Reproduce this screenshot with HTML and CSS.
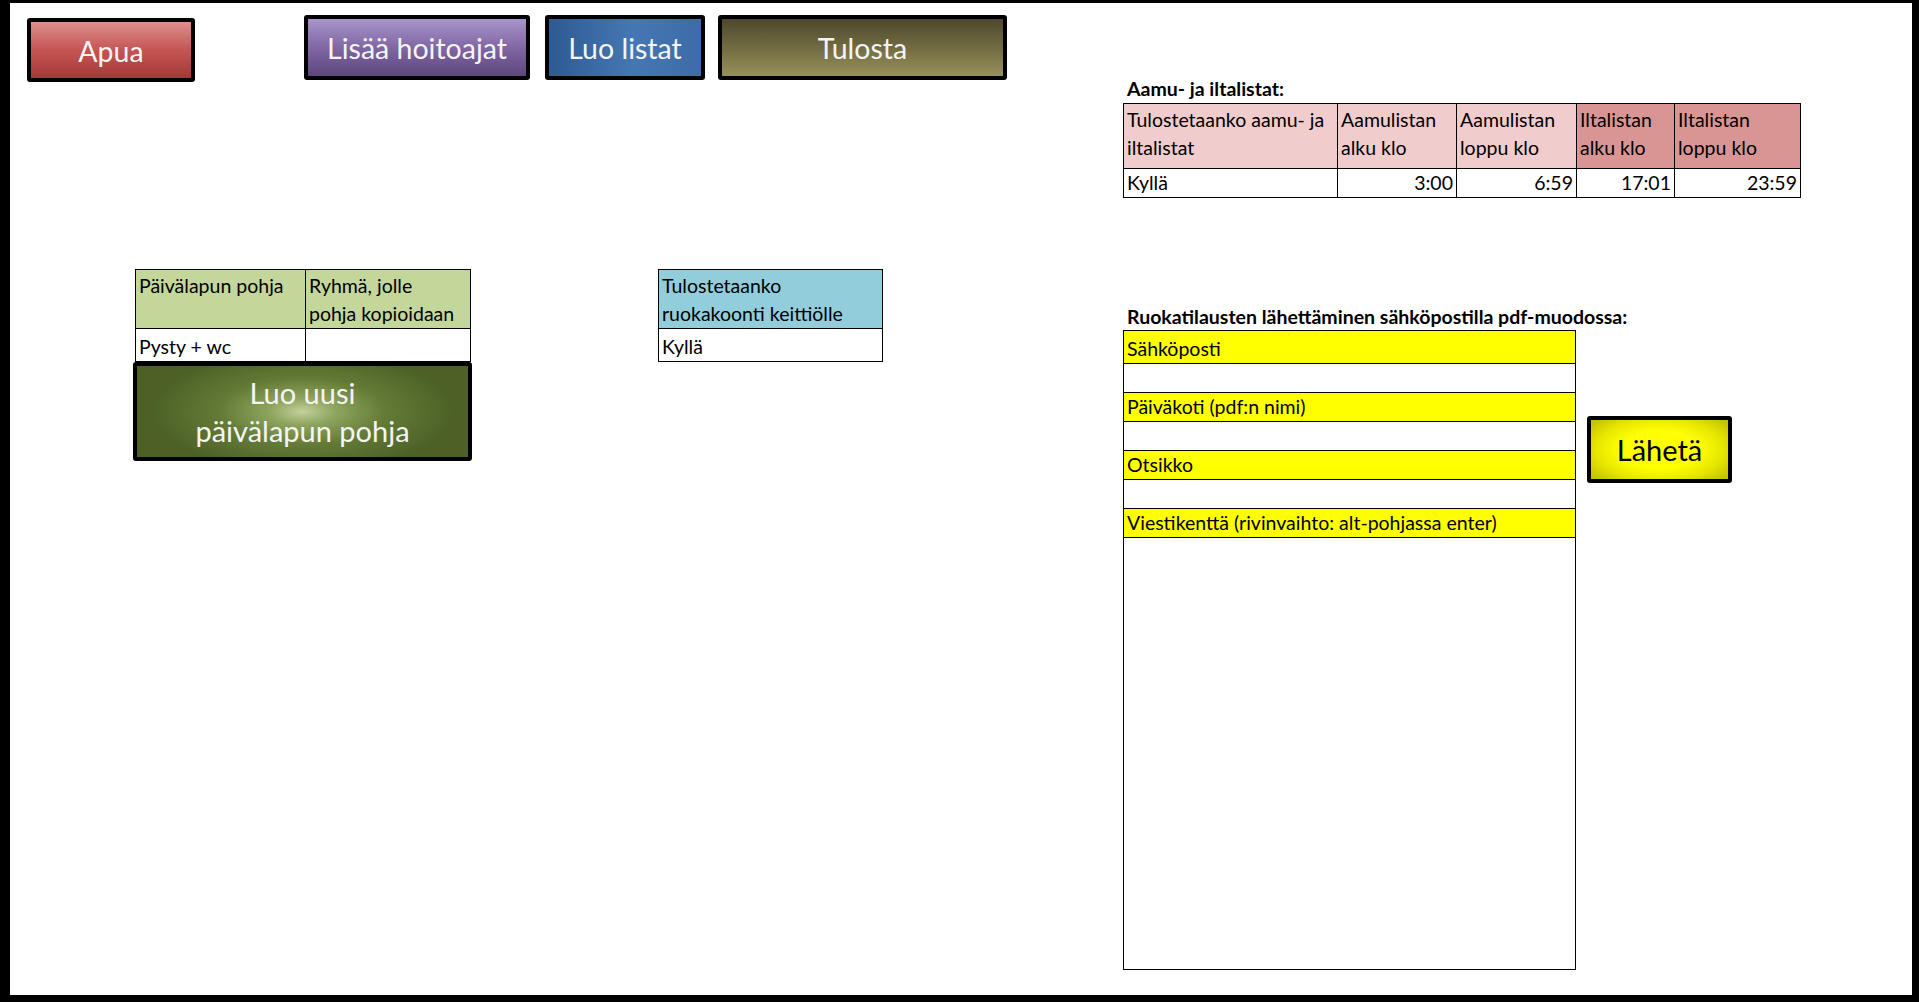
FILE: index.html
```html
<!DOCTYPE html>
<html lang="fi">
<head>
<meta charset="utf-8">
<title>Päivälaput</title>
<link rel="stylesheet" href="styles.css">
</head>
<body>
<div class="sheet">
  <div class="left">
    <div class="buttons">
      <div class="btn btn-apua">Apua</div>
      <div class="btn btn-lisaa">Lisää hoitoajat</div>
      <div class="btn btn-luo">Luo listat</div>
      <div class="btn btn-tulosta">Tulosta</div>
    </div>
    <div class="lower">
      <div class="green-block">
        <table class="grid green">
          <colgroup><col class="g1"><col class="g2"></colgroup>
          <tr class="head"><td>Päivälapun pohja</td><td>Ryhmä, jolle<br>pohja kopioidaan</td></tr>
          <tr class="data"><td>Pysty + wc</td><td></td></tr>
        </table>
        <div class="btn btn-uusi">Luo uusi<br>päivälapun pohja</div>
      </div>
      <table class="grid blue">
        <tr class="head"><td>Tulostetaanko<br>ruokakoonti keittiölle</td></tr>
        <tr class="data"><td>Kyllä</td></tr>
      </table>
    </div>
  </div>
  <div class="right">
    <div class="title">Aamu- ja iltalistat:</div>
    <table class="grid aamu">
      <colgroup><col class="a1"><col class="a2"><col class="a3"><col class="a4"><col class="a5"></colgroup>
      <tr class="head">
        <td class="pink">Tulostetaanko aamu- ja iltalistat</td>
        <td class="pink">Aamulistan alku klo</td>
        <td class="pink">Aamulistan loppu klo</td>
        <td class="rose">Iltalistan alku klo</td>
        <td class="rose">Iltalistan loppu klo</td>
      </tr>
      <tr class="data">
        <td>Kyllä</td>
        <td class="num">3:00</td>
        <td class="num">6:59</td>
        <td class="num">17:01</td>
        <td class="num">23:59</td>
      </tr>
    </table>
    <div class="title email-title">Ruokatilausten lähettäminen sähköpostilla pdf-muodossa:</div>
    <div class="email-row">
      <table class="grid email">
        <tr class="y first"><td>Sähköposti</td></tr>
        <tr class="w"><td></td></tr>
        <tr class="y"><td>Päiväkoti (pdf:n nimi)</td></tr>
        <tr class="w"><td></td></tr>
        <tr class="y"><td>Otsikko</td></tr>
        <tr class="w"><td></td></tr>
        <tr class="y"><td>Viestikenttä (rivinvaihto: alt-pohjassa enter)</td></tr>
        <tr class="big"><td></td></tr>
      </table>
      <div class="btn btn-laheta">Lähetä</div>
    </div>
  </div>
</div>
</body>
</html>
```
FILE: styles.css
```css
* { box-sizing: border-box; }
html, body { margin: 0; padding: 0; background: #000; }
body { font-family: Lato, "Open Sans", sans-serif; color: #000; }

.sheet {
  width: 1919px;
  height: 1002px;
  background: #fff;
  border-style: solid;
  border-color: #000;
  border-width: 3px 7px 7px 10px;
  display: grid;
  grid-template-columns: 1113px 1fr;
}

/* buttons */
.btn {
  display: flex;
  align-items: center;
  justify-content: center;
  text-align: center;
  border: 4px solid #000;
  border-radius: 3px;
  color: #f4f4f4;
  font-size: 28.5px;
  line-height: 36px;
}
.buttons {
  display: flex;
  align-items: flex-start;
  height: 79px;
  padding: 12px 0 0 17px;
}
.btn-apua {
  width: 168px; height: 64px; margin-top: 3px;
  padding-top: 2px;
  background: linear-gradient(to bottom, #dc8f8e 0%, #c55553 50%, #a23a38 100%);
}
.btn-lisaa {
  width: 226px; height: 65px; margin-left: 109px;
  background: linear-gradient(to bottom, #a895c9 0%, #8167a5 50%, #5d467c 100%);
}
.btn-luo {
  width: 160px; height: 65px; margin-left: 15px;
  background: linear-gradient(to right, #2e5a92 0%, #4577b4 55%, #3d6ca8 100%);
}
.btn-tulosta {
  width: 289px; height: 65px; margin-left: 13px;
  background: linear-gradient(to bottom, #4c482d 0%, #716b42 50%, #989059 100%);
}

.lower {
  display: flex;
  align-items: flex-start;
  padding: 187px 0 0 123px;
}
.green-block { width: 339px; }
.btn-uusi {
  width: 339px; height: 99px;
  font-size: 29px;
  line-height: 38px;
  background: radial-gradient(ellipse 150px 60px at 50% 50%, #c3d19e 0%, #8ea55e 22%, #637b36 55%, #4d6127 100%);
}
.btn-laheta {
  width: 145px; height: 67px; margin: 86px 0 0 11px;
  color: #000;
  font-size: 29px;
  background: radial-gradient(ellipse 85px 42px at 50% 50%, #ffff00 45%, #e6e600 75%, #c4c400 100%);
}

/* spreadsheet grids */
.grid {
  border-collapse: collapse;
  table-layout: fixed;
  font-size: 19.5px;
}
.grid td {
  border: 1px solid #000;
  padding: 0 3px;
  line-height: 28px;
  overflow: hidden;
  white-space: nowrap;
}
.grid .head td { white-space: normal; vertical-align: top; padding-top: 2px; }
.grid .data td { vertical-align: bottom; }
.grid .num { text-align: right; }

.green { width: 335px; margin: 0 2px; }
.green .g1 { width: 170px; }
.green .g2 { width: 165px; }
.green .head td { background: #c4d79b; height: 59px; }
.green .data td { height: 33px; }

.blue { width: 225px; margin-left: 186px; }
.blue .head td { background: #92cddc; height: 59px; }
.blue .data td { height: 33px; }

.right { padding-top: 72px; }
.title {
  font-weight: bold;
  font-size: 19.5px;
  line-height: 28px;
  height: 28px;
  padding-left: 4px;
}
.aamu { width: 677px; }
.aamu .a1 { width: 214px; }
.aamu .a2 { width: 119px; }
.aamu .a3 { width: 120px; }
.aamu .a4 { width: 98px; }
.aamu .a5 { width: 126px; }
.aamu .head td { height: 65px; }
.aamu .data td { height: 28px; }
.pink { background: #f1cccc; }
.rose { background: #d99593; }

.email-title { margin-top: 105px; height: 27px; line-height: 27px; }
.email-row { display: flex; align-items: flex-start; }
.email { width: 453px; }
.email td { vertical-align: bottom; }
.email .y td { background: #ffff00; height: 29px; }
.email .y.first td { height: 33px; }
.email .w td { height: 29px; }
.email .big td { height: 432px; }
```
